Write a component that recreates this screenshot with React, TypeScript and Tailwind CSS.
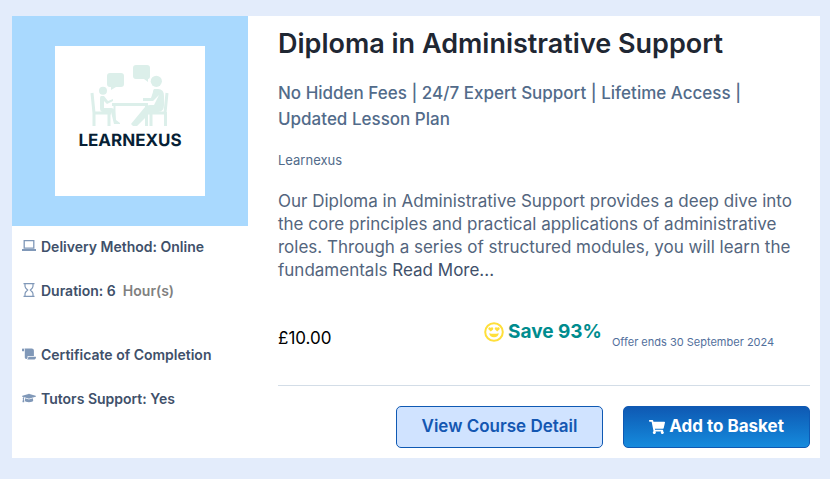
import type { ReactNode } from 'react';
import { FaGraduationCap, FaScroll, FaShoppingCart } from 'react-icons/fa';

interface FeatureProps {
  icon: ReactNode;
  children: ReactNode;
  className?: string;
}

function Feature({ icon, children, className = '' }: FeatureProps) {
  return (
    <li className={`flex items-center gap-1 leading-5 ${className}`}>
      <span className="w-[15px] pb-[2px] text-[14px] text-[#8098b8] flex flex-shrink-0">{icon}</span>
      <span className="whitespace-nowrap">{children}</span>
    </li>
  );
}

function LaptopIcon() {
  return (
    <svg viewBox="0 0 14 14" className="h-[14px] w-[14px]" fill="none" aria-hidden="true">
      <path stroke="currentColor" strokeWidth="1.3" d="M2.2 1.6h9.6v7.6H2.2z" />
      <path fill="currentColor" d="M0 10h14v2H0z" />
    </svg>
  );
}

function HourglassIcon() {
  return (
    <svg viewBox="0 0 14 14" className="h-[14px] w-[14px]" fill="none" stroke="currentColor" strokeWidth="1.2" aria-hidden="true">
      <path d="M1.5.6h11M1.5 13.4h11M3 1v2.2Q3 4.6 5.6 7 3 9.4 3 10.8V13M11 1v2.2Q11 4.6 8.4 7 11 9.4 11 10.8V13" />
    </svg>
  );
}

function SmileyIcon() {
  return (
    <svg viewBox="0 0 20 20" className="h-5 w-5 text-[#ffdf3a]" fill="currentColor" aria-hidden="true">
      <circle cx="10" cy="10" r="8.8" fill="none" stroke="currentColor" strokeWidth="2" />
      <path d="M6.8 9.4L4.4 7.3Q3.8 5.6 5.4 5.2q.9-.1 1.4.7.6-.8 1.5-.6 1.5.5.8 2.1zM13.2 9.4l-2.3-2.1q-.7-1.6.8-2.1 1-.2 1.5.6.5-.8 1.5-.6 1.5.5.9 2.1z" />
      <path d="M5.2 11.2q4.8 1.3 9.6 0-.6 4-4.8 4t-4.8-4z" />
    </svg>
  );
}

function ProviderLogo() {
  return (
    <svg viewBox="0 0 150 150" className="w-[150px] bg-white" role="img" aria-label="Learnexus">
      <g fill="#dcefea">
        {/* Speech bubbles */}
        <path d="M55 27h11q3 0 3 3v8q0 3-3 3h-5l-5 3v-3h-1q-3 0-3-3v-8q0-3 3-3z" />
        <path d="M81 19h11q3 0 3 3v8q0 3-2 3v3l-4-3h-8q-3 0-3-3v-8q0-3 3-3z" />
        {/* Heads */}
        <circle cx="48" cy="44.7" r="4" />
        <circle cx="101.3" cy="35.3" r="5.6" />
        {/* Child */}
        <path d="M46 50h3l4 5 5-2v2l-6 3-3-3v7h7q3 0 4 3l1 9 4 3v1h-6l-3-12h-8q-3 0-3-4V53q0-3 1-3z" />
        {/* Adult */}
        <path d="M99 43h4q6 0 6 7v9q0 7-6 7h-7L82 80h-4l-2-2 14-17q2-2 5-2h4l5-10-6 6h-10v-3h8l2-6q0-2 1-3z" />
      </g>
      <g fill="none" stroke="#dcefea" strokeWidth="3">
        {/* Chairs */}
        <path d="M37 47l2 20h17M39 66v14M54 67v13M112 47l-2 20H94M110.5 66v14M96 67v13" />
        {/* Table */}
        <path d="M57 58.5h36M91.5 59v21" />
        <path strokeWidth="2" d="M59.5 59v14" />
      </g>
      <text x="75" y="100" textAnchor="middle" textRendering="geometricPrecision" className="fill-[#071f35] font-['Inter',sans-serif] text-[17px] font-bold">
        LEARNEXUS
      </text>
    </svg>
  );
}

export default function App() {
  return (
    <main className="min-h-screen bg-[#e3ecfb] pt-4 pr-[10px] pb-[21px] pl-3 font-['Inter',sans-serif]">
      <article className="flex bg-white">
        <aside className="w-[236px] flex-shrink-0">
          <div className="flex justify-center bg-[#a9d9fe] py-[30px]">
            <ProviderLogo />
          </div>
          <ul className="px-[10px] pt-[11px] text-[14px] font-semibold text-[#40506a]">
            <Feature icon={<LaptopIcon />}>Delivery Method:&nbsp;Online</Feature>
            <Feature icon={<HourglassIcon />} className="mt-6">
              Duration:&nbsp;6&nbsp; <span className="text-[#808080]">Hour(s)</span>
            </Feature>
            <Feature icon={<FaScroll />} className="mt-11">Certificate of Completion</Feature>
            <Feature icon={<FaGraduationCap />} className="mt-6">Tutors Support:&nbsp;Yes</Feature>
          </ul>
        </aside>

        <div className="min-w-0 flex-1 pr-[10px] pb-[10px] pl-[30px]">
          <h1 className="pt-3 text-[27px] leading-8 font-semibold text-[#1f2733]">Diploma in Administrative Support</h1>
          <h2 className="mt-5 text-[17px] leading-[26px] font-medium text-[#526b8a]">
            No Hidden Fees | 24/7 Expert Support | Lifetime Access |
            <br />
            Updated Lesson Plan
          </h2>
          <p className="mt-[18px] text-[13px] leading-5 text-[#526b8a]">Learnexus</p>
          <p className="mt-5 text-[17px] leading-[23px] text-[#53657d]">
            Our Diploma in Administrative Support provides a deep dive into
            the core principles and practical applications of administrative
            roles. Through a series of structured modules, you will learn the
            fundamentals <a href="#more" className="text-[#40506a]">Read More...</a>
          </p>

          <div className="mt-9 flex h-11 items-start">
            <p className="w-[206px] flex-shrink-0 pt-2 text-[17px] leading-6 text-black">£10.00</p>
            <p className="flex items-center gap-1 text-[19px] leading-7 font-bold text-[#008c8e] whitespace-nowrap">
              <SmileyIcon />
              Save 93%
            </p>
            <p className="ml-[10px] pt-4 text-[11px] leading-4 text-[#526f9c] whitespace-nowrap">Offer ends 30 September 2024</p>
          </div>

          <div className="mt-[23px] flex justify-end gap-5 border-t border-[#d3dde7] pt-5">
            <button className="h-[42px] w-[207px] rounded-[5px] border border-[#0f59b3] bg-[#d0e3ff] text-[17px] font-semibold text-[#1457b2]">
              View Course Detail
            </button>
            <button className="flex h-[42px] w-[187px] items-center justify-center gap-1 rounded-[5px] border border-[#0f59b3] bg-linear-to-b from-[#0f59b3] to-[#168bdd] text-[17px] font-bold text-white">
              <FaShoppingCart className="text-[16px]" />
              Add to Basket
            </button>
          </div>
        </div>
      </article>
    </main>
  );
}
